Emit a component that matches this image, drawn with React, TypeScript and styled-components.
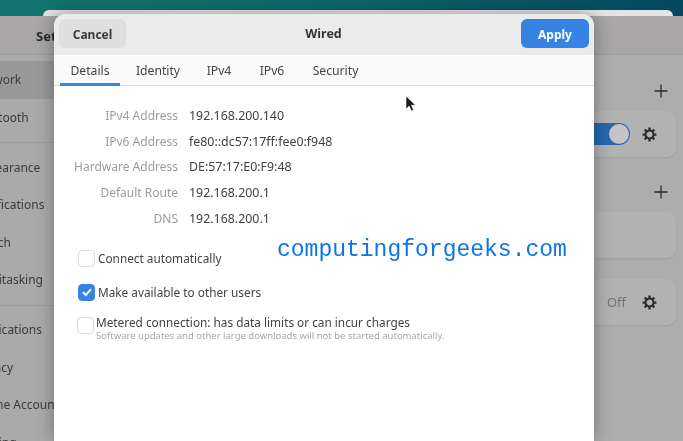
import { Fragment } from 'react';
import styled, { createGlobalStyle } from 'styled-components';

const GlobalStyle = createGlobalStyle`
  html, body {
    margin: 0;
    padding: 0;
    background: #0b5c68;
  }
  body {
    font-family: "Noto Sans", "Open Sans", sans-serif;
  }
`;

const Desktop = styled.div`
  position: relative;
  width: 683px;
  height: 441px;
  overflow: hidden;
  padding-top: 10px;
  box-sizing: border-box;
  display: flex;
  flex-direction: column;
  background: linear-gradient(90deg, #14756f 0%, #0c6a6c 45%, #04485f 100%);
  filter: blur(0.35px);
`;

const WindowEdge = styled.div`
  flex: none;
  height: 6px;
  margin: 0 10px 0 43px;
  border-radius: 8px 8px 0 0;
  background: #e6e3e3;
`;

const SettingsWindow = styled.div`
  flex: 1;
  min-height: 0;
  margin-left: -40px;
  display: flex;
  flex-direction: column;
  background: #adadad;
  color: #2b2b2b;
`;

const WindowHeader = styled.div`
  flex: none;
  height: 39px;
  box-sizing: border-box;
  padding: 11px 0 0 76px;
  border-bottom: 1px solid #9c9c9c;
  background: #a8a6a6;
  font-size: 13px;
  font-weight: 700;
  line-height: 18px;
`;

const WindowBody = styled.div`
  flex: 1;
  min-height: 0;
  display: flex;
`;

const Sidebar = styled.nav`
  flex: none;
  width: 240px;
  padding-top: 6px;
  display: flex;
  flex-direction: column;
  background: #aaaaaa;
`;

const SidebarItem = styled.div<{ $active?: boolean }>`
  flex: none;
  height: 37.5px;
  line-height: 37.5px;
  padding-left: 13px;
  font-size: 12px;
  white-space: nowrap;
  color: #3a3a3a;
  background: ${({ $active }) => ($active ? '#999999' : 'transparent')};
`;

const SidebarRule = styled.div`
  flex: none;
  height: 1px;
  margin: 6px 0 5.5px;
  background: #9d9d9d;
`;

const Content = styled.main`
  flex: 1;
  padding: 28px 7px 0 0;
  display: flex;
  flex-direction: column;
  align-items: flex-end;
`;

const PlusButton = styled.svg<{ $gap?: number }>`
  flex: none;
  width: 16px;
  height: 16px;
  margin: ${({ $gap }) => $gap ?? 0}px 7px 12px 0;
`;

const Card = styled.div<{ $gap?: number }>`
  flex: none;
  width: 380px;
  height: 46px;
  box-sizing: border-box;
  margin-top: ${({ $gap }) => $gap ?? 0}px;
  padding-right: 19px;
  display: flex;
  align-items: center;
  justify-content: flex-end;
  gap: 12px;
  border-radius: 9px;
  background: #b2b2b2;
  box-shadow: 0 1px 2px rgba(0, 0, 0, 0.08);
`;

const Toggle = styled.div`
  width: 48px;
  height: 22px;
  border-radius: 11px;
  display: flex;
  justify-content: flex-end;
  background: #2568ad;
`;

const ToggleKnob = styled.div`
  width: 20px;
  height: 20px;
  margin: 1px;
  border-radius: 50%;
  background: #c4c4c4;
`;

const OffLabel = styled.span`
  margin-right: 4px;
  font-size: 13px;
  color: #727272;
`;

const Dialog = styled.section`
  position: absolute;
  left: 54px;
  top: 14px;
  bottom: 0;
  width: 540px;
  display: flex;
  flex-direction: column;
  border-radius: 12px 12px 0 0;
  background: #ffffff;
  box-shadow: 0 0 18px rgba(0, 0, 0, 0.35);
  overflow: hidden;
  color: #3d3d3d;
`;

const DialogHeader = styled.header`
  flex: none;
  height: 41px;
  box-sizing: border-box;
  padding: 5px;
  display: flex;
  align-items: flex-start;
  justify-content: space-between;
  background: #ebebeb;
`;

const DialogTitle = styled.h1`
  margin: 0;
  font-size: 12.5px;
  font-weight: 700;
  line-height: 30px;
  color: #333333;
`;

const HeaderButton = styled.button<{ $primary?: boolean }>`
  height: 29px;
  width: ${({ $primary }) => ($primary ? 68 : 67)}px;
  padding: 1px 0 0;
  border: 0;
  border-radius: 6px;
  font-family: inherit;
  font-size: 12px;
  font-weight: 700;
  color: ${({ $primary }) => ($primary ? '#ffffff' : '#3a3a3a')};
  background: ${({ $primary }) => ($primary ? '#3584e4' : '#dfdfdf')};
`;

const TabBar = styled.div`
  flex: none;
  height: 31px;
  box-sizing: border-box;
  padding-left: 6px;
  display: flex;
  border-bottom: 1px solid #dcdcdc;
  background: #fafafa;
`;

const Tab = styled.div<{ $active?: boolean; $width: number }>`
  flex: none;
  width: ${({ $width }) => $width}px;
  height: 31px;
  box-sizing: border-box;
  text-align: center;
  font-size: 12.2px;
  line-height: 32px;
  color: #454545;
  border-bottom: 3px solid ${({ $active }) => ($active ? '#3584e4' : 'transparent')};
`;

const DetailGrid = styled.dl`
  margin: 16.5px 0 0;
  display: grid;
  grid-template-columns: 124px auto;
  grid-auto-rows: 25.8px;
  column-gap: 11px;
  align-items: center;
  justify-content: start;
`;

const DetailLabel = styled.dt`
  text-align: right;
  font-size: 12px;
  color: #9c9c9c;
`;

const DetailValue = styled.dd`
  margin: 0;
  font-size: 12.4px;
  color: #3f3f3f;
`;

const Options = styled.div`
  margin-top: 18px;
  padding-left: 24px;
  display: flex;
  flex-direction: column;
`;

const CheckRow = styled.div<{ $gap?: number }>`
  display: flex;
  align-items: center;
  gap: 3px;
  height: 18px;
  margin-top: ${({ $gap }) => $gap ?? 0}px;
  font-size: 11.8px;
  color: #434343;
`;

const CheckBox = styled.span<{ $checked?: boolean }>`
  flex: none;
  width: 17px;
  height: 17px;
  box-sizing: border-box;
  display: flex;
  align-items: center;
  justify-content: center;
  border-radius: 4px;
  border: 1px solid ${({ $checked }) => ($checked ? '#3584e4' : '#dcdcdc')};
  background: ${({ $checked }) => ($checked ? '#3584e4' : '#ffffff')};
`;

const MeteredRow = styled.div`
  margin: 16px 0 0 -1px;
  display: flex;
  gap: 2px;
`;

const MeteredText = styled.div`
  display: flex;
  flex-direction: column;
  margin-top: -3px;
`;

const MeteredTitle = styled.span`
  font-size: 11.8px;
  line-height: 16px;
  color: #434343;
`;

const MeteredHint = styled.span`
  font-size: 9.5px;
  line-height: 12px;
  color: #a8a8a8;
`;

const Watermark = styled.div`
  position: absolute;
  left: 277px;
  top: 237px;
  font-family: "Liberation Mono", monospace;
  font-size: 23px;
  line-height: 26px;
  white-space: nowrap;
  color: #0f75e3;
`;

const Pointer = styled.svg`
  position: absolute;
  left: 405px;
  top: 95px;
  width: 12px;
  height: 18px;
`;

function Plus({ gap }: { gap?: number }) {
  return (
    <PlusButton $gap={gap} viewBox="0 0 16 16">
      <path d="M8 1.5v13M1.5 8h13" stroke="#2b2b2b" strokeWidth="1.3" fill="none" />
    </PlusButton>
  );
}

function Gear() {
  return (
    <svg width="15" height="15" viewBox="0 0 16 16" fill="none">
      <circle cx="8" cy="8" r="4.3" stroke="#2a2a2a" strokeWidth="2.2" />
      <g stroke="#2a2a2a" strokeWidth="2.4">
        <path d="M8 0.6v2.6M8 12.8v2.6M0.6 8h2.6M12.8 8h2.6" />
        <path d="M2.8 2.8l1.8 1.8M11.4 11.4l1.8 1.8M13.2 2.8l-1.8 1.8M4.6 11.4l-1.8 1.8" />
      </g>
    </svg>
  );
}

function Check() {
  return (
    <svg width="12" height="12" viewBox="0 0 12 12" fill="none">
      <path d="M2 6.3l2.8 2.8L10 3.2" stroke="#ffffff" strokeWidth="2" />
    </svg>
  );
}

const details = [
  ['IPv4 Address', '192.168.200.140'],
  ['IPv6 Address', 'fe80::dc57:17ff:fee0:f948'],
  ['Hardware Address', 'DE:57:17:E0:F9:48'],
  ['Default Route', '192.168.200.1'],
  ['DNS', '192.168.200.1'],
];

const tabs = [
  { label: 'Details', width: 60, active: true },
  { label: 'Identity', width: 76 },
  { label: 'IPv4', width: 46 },
  { label: 'IPv6', width: 60 },
  { label: 'Security', width: 67 },
];

export default function App() {
  return (
    <Desktop>
      <GlobalStyle />
      <WindowEdge />
      <SettingsWindow>
        <WindowHeader>Settings</WindowHeader>
        <WindowBody>
          <Sidebar>
            <SidebarItem $active>Network</SidebarItem>
            <SidebarItem>Bluetooth</SidebarItem>
            <SidebarRule />
            <SidebarItem>Appearance</SidebarItem>
            <SidebarItem>Notifications</SidebarItem>
            <SidebarItem>Search</SidebarItem>
            <SidebarItem>Multitasking</SidebarItem>
            <SidebarRule />
            <SidebarItem>Applications</SidebarItem>
            <SidebarItem>Privacy</SidebarItem>
            <SidebarItem>Online Accounts</SidebarItem>
            <SidebarItem>Sharing</SidebarItem>
          </Sidebar>
          <Content>
            <Plus />
            <Card>
              <Toggle>
                <ToggleKnob />
              </Toggle>
              <Gear />
            </Card>
            <Plus gap={27} />
            <Card />
            <Card $gap={21}>
              <OffLabel>Off</OffLabel>
              <Gear />
            </Card>
          </Content>
        </WindowBody>
      </SettingsWindow>

      <Dialog>
        <DialogHeader>
          <HeaderButton>Cancel</HeaderButton>
          <DialogTitle>Wired</DialogTitle>
          <HeaderButton $primary>Apply</HeaderButton>
        </DialogHeader>
        <TabBar>
          {tabs.map((tab) => (
            <Tab key={tab.label} $active={tab.active} $width={tab.width}>
              {tab.label}
            </Tab>
          ))}
        </TabBar>
        <DetailGrid>
          {details.map(([label, value]) => (
            <Fragment key={label}>
              <DetailLabel>{label}</DetailLabel>
              <DetailValue>{value}</DetailValue>
            </Fragment>
          ))}
        </DetailGrid>
        <Options>
          <CheckRow>
            <CheckBox />
            Connect automatically
          </CheckRow>
          <CheckRow $gap={16}>
            <CheckBox $checked>
              <Check />
            </CheckBox>
            Make available to other users
          </CheckRow>
          <MeteredRow>
            <CheckBox />
            <MeteredText>
              <MeteredTitle>Metered connection: has data limits or can incur charges</MeteredTitle>
              <MeteredHint>Software updates and other large downloads will not be started automatically.</MeteredHint>
            </MeteredText>
          </MeteredRow>
        </Options>
      </Dialog>

      <Watermark>computingforgeeks.com</Watermark>
      <Pointer viewBox="0 0 12 18">
        <path d="M1 1v13l3.2-3 2.2 5 2.2-1-2.2-4.8H10.500z" fill="#1a1a1a" stroke="#ffffff" strokeWidth="0.6" />
      </Pointer>
    </Desktop>
  );
}
